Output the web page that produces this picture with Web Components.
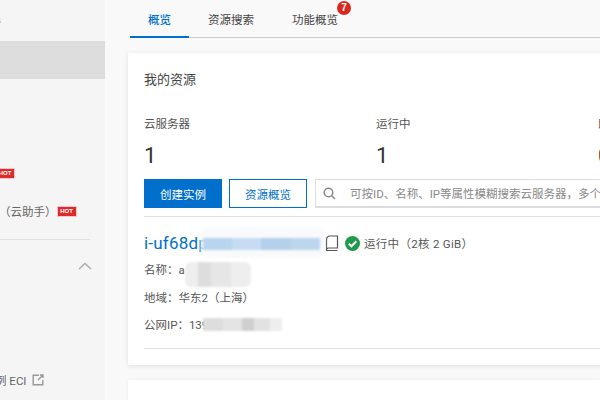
<!doctype html>
<html><head><meta charset="utf-8"><style>
html,body{margin:0;width:600px;height:400px;overflow:hidden;background:#f9f9f9;font-family:Roboto,"Noto Sans CJK SC",sans-serif;color:#333}
</style></head><body>
<x-app>
  <x-side></x-side>
  <x-main></x-main>
</x-app>
<script>
function def(name,html){customElements.define(name,class extends HTMLElement{constructor(){super();this.attachShadow({mode:'open'}).innerHTML=html}})}
def('x-app',`<style>:host{display:flex;width:600px;height:400px;overflow:hidden}</style><slot></slot>`);
def('x-hot',`<style>:host{display:inline-block;width:18px;height:9px;background:#e02a2a;color:#fff;font:700 6px/9px "Liberation Sans",sans-serif;text-align:center;outline:1px solid #f0c8d0}</style>HOT`);
def('x-side',`<style>
:host{display:block;flex:none;width:105px;height:400px;background:#f5f5f5;overflow:hidden;font-size:11.5px;color:#666}
.s{height:41px;box-sizing:border-box;padding-top:13px;margin-left:-6px;font:600 12px/14px "Liberation Sans",sans-serif;color:#3a5a80}
.a{height:38px;background:#ddd}
.h1{height:99px;box-sizing:border-box;padding-top:90px;margin-left:-4px;display:block}
.h1 x-hot{display:block}
.row{display:flex;align-items:center;height:18px;margin-left:-1px;margin-top:24px;white-space:nowrap}
.row x-hot{margin-left:1px;flex:none}
.d{height:1px;background:#e0e0e0;width:90px;margin-top:19px}
.c{display:flex;justify-content:flex-end;width:92px;margin-top:22px;height:10px}
.e{display:flex;align-items:center;gap:5px;height:18px;margin-top:99px;margin-left:-5px;white-space:nowrap}
</style>
<div class="s">s</div><div class="a"></div>
<div class="h1"><x-hot></x-hot></div>
<div class="row"><span>（云助手）</span><x-hot></x-hot></div>
<div class="d"></div>
<div class="c"><svg width="14" height="8" viewBox="0 0 14 8" fill="none" stroke="#aaa" stroke-width="1.4"><path d="M1 7 7 1.5 13 7"/></svg></div>
<div class="e"><span>例 ECI</span><svg width="12" height="12" viewBox="0 0 12 12" fill="none" stroke="#999" stroke-width="1.4"><path d="M7 1.2H1.2v9.6h9.6V6M6 6l5-5M8 1h3v3"/></svg></div>`);
def('x-tabs',`<style>
:host{display:flex;height:38px;box-sizing:border-box;border-bottom:1px solid #ccc;font-size:11.5px;color:#444;margin-left:25px}
a{display:block;position:relative;height:38px;box-sizing:border-box;padding-top:11px;line-height:18px;text-align:center}
.t1{width:59px;color:#0070cc;font-weight:500;border-bottom:2px solid #0070cc}
.t2{width:84px}.t3{width:84px}
.b{position:absolute;left:64px;top:1px;width:14px;height:14px;border-radius:50%;background:#d9291c;color:#fff;font:700 10px/14px "Liberation Sans",sans-serif}
</style><a class="t1">概览</a><a class="t2">资源搜索</a><a class="t3">功能概览<span class="b">7</span></a>`);
def('x-main',`<style>:host{display:block;flex:1;min-width:0;overflow:hidden}
.c2{margin-top:15px;margin-left:23px;height:40px;background:#fff;box-shadow:0 0 4px rgba(0,0,0,.06)}</style>
<x-tabs></x-tabs><x-res></x-res><div class="c2"></div>`);
def('x-stat',`<style>:host{display:block;flex:none;width:var(--w,232px);font-size:11.5px;color:#555}
.l{line-height:18px;white-space:nowrap}.n{font:400 22px/26px Roboto,sans-serif;color:#333;margin-top:10px}</style>
<div class="l"><slot name="l"></slot></div><div class="n"><slot name="n"></slot></div>`);
def('x-res',`<style>
:host{display:block;margin:15px 0 0 23px;width:520px;height:312px;box-sizing:border-box;background:#fff;box-shadow:0 1px 5px rgba(0,0,0,.1);padding:17px 0 0 16px;position:relative;font-size:11.5px;color:#555}
.t{font-size:13px;line-height:20px;color:#444}
.st{display:flex;margin-top:25px}
.c2{--w:222px}
.b{display:flex;gap:7px;margin-top:10px;height:29px}
.p,.o{flex:none;display:flex;align-items:center;justify-content:center;box-sizing:border-box;height:29px;width:78px;background:#0070cc;color:#fff}
.o{background:#fff;border:1px solid #0070cc;color:#0070cc}
.s{flex:none;display:flex;align-items:center;box-sizing:border-box;width:400px;height:29px;margin-left:1px;border:1px solid #ddd;border-bottom-width:2px;padding-left:7px;color:#888;white-space:nowrap;overflow:hidden}
.s svg{margin-right:14px;flex:none}
.hr{height:1px;background:#e2e2e2;margin-top:8px}
.id{display:flex;align-items:center;margin-top:15px;height:22px;white-space:nowrap}
.link{font:400 17px/22px Roboto,sans-serif;color:#0070cc;width:181px;letter-spacing:.2px;overflow:hidden}
.ok{margin:0 4px 0 6px}
.sz{letter-spacing:.3px}
.l{line-height:18px;white-space:nowrap;color:#555}
.l1{margin-top:7px}.l2{margin-top:10px}.l3{margin-top:9px}
.hr2{height:1px;background:#e2e2e2;margin-top:14px}
.bl{position:absolute;filter:blur(1px)}
.b1{left:75px;top:185px;width:117px;height:12px;background:linear-gradient(90deg,#b8d4ee 0 25%,#c6dcf2 25% 50%,#b5d0ea 50% 75%,#bcd6ee 75%)}
.b1w{left:72px;top:174px;width:125px;height:31px;background:#f6f9fc;opacity:.7;border-radius:8px}
.b2{left:57px;top:209px;width:66px;height:25px;background:linear-gradient(90deg,#eee 0 20%,#ddd 20% 40%,#e6e6e6 40% 70%,#eee 70%);border-radius:6px}
.b3{left:75px;top:265px;width:79px;height:13px;background:linear-gradient(90deg,#ddd 0 25%,#e4e4e4 25% 50%,#cfcfcf 50% 65%,#e2e2e2 65% 85%,#eee 85%)}
</style>
<div class="t">我的资源</div>
<div class="st">
<x-stat><span slot="l">云服务器</span><span slot="n">1</span></x-stat>
<x-stat class="c2"><span slot="l">运行中</span><span slot="n">1</span></x-stat>
<x-stat><span slot="l">即将过期</span><span slot="n">0</span></x-stat>
</div>
<div class="b"><div class="p">创建实例</div><div class="o">资源概览</div>
<div class="s"><svg width="13" height="13" viewBox="0 0 13 13" fill="none" stroke="#888" stroke-width="1.5"><circle cx="5.5" cy="5.5" r="4.3"/><path d="M8.7 8.7 12 12"/></svg>可按ID、名称、IP等属性模糊搜索云服务器，多个关键字用逗号分隔</div></div>
<div class="hr"></div>
<div class="id"><span class="link">i-uf68dp</span>
<svg width="14" height="17" viewBox="0 0 14 17" fill="none" stroke="#555" stroke-width="1.2"><path d="M1.500 15V5Q1.500 1 5 1h7.500v12H3.500Q1.500 13 1.500 15.500h11"/></svg>
<svg class="ok" width="15" height="15" viewBox="0 0 15 15"><circle cx="7.500" cy="7.500" r="7.500" fill="#1f9a4a"/><path d="M3.800 7.700 6.500 10.300 11.300 5.200" fill="none" stroke="#fff" stroke-width="2"/></svg>
<span class="sz">运行中（2核 2 GiB）</span></div>
<div class="l l1">名称：a</div><div class="l l2">地域：华东2（上海）</div><div class="l l3">公网IP：139</div>
<div class="hr2"></div>
<div class="bl b1w"></div><div class="bl b1"></div><div class="bl b2"></div><div class="bl b3"></div>`);
</script>
</body></html>
